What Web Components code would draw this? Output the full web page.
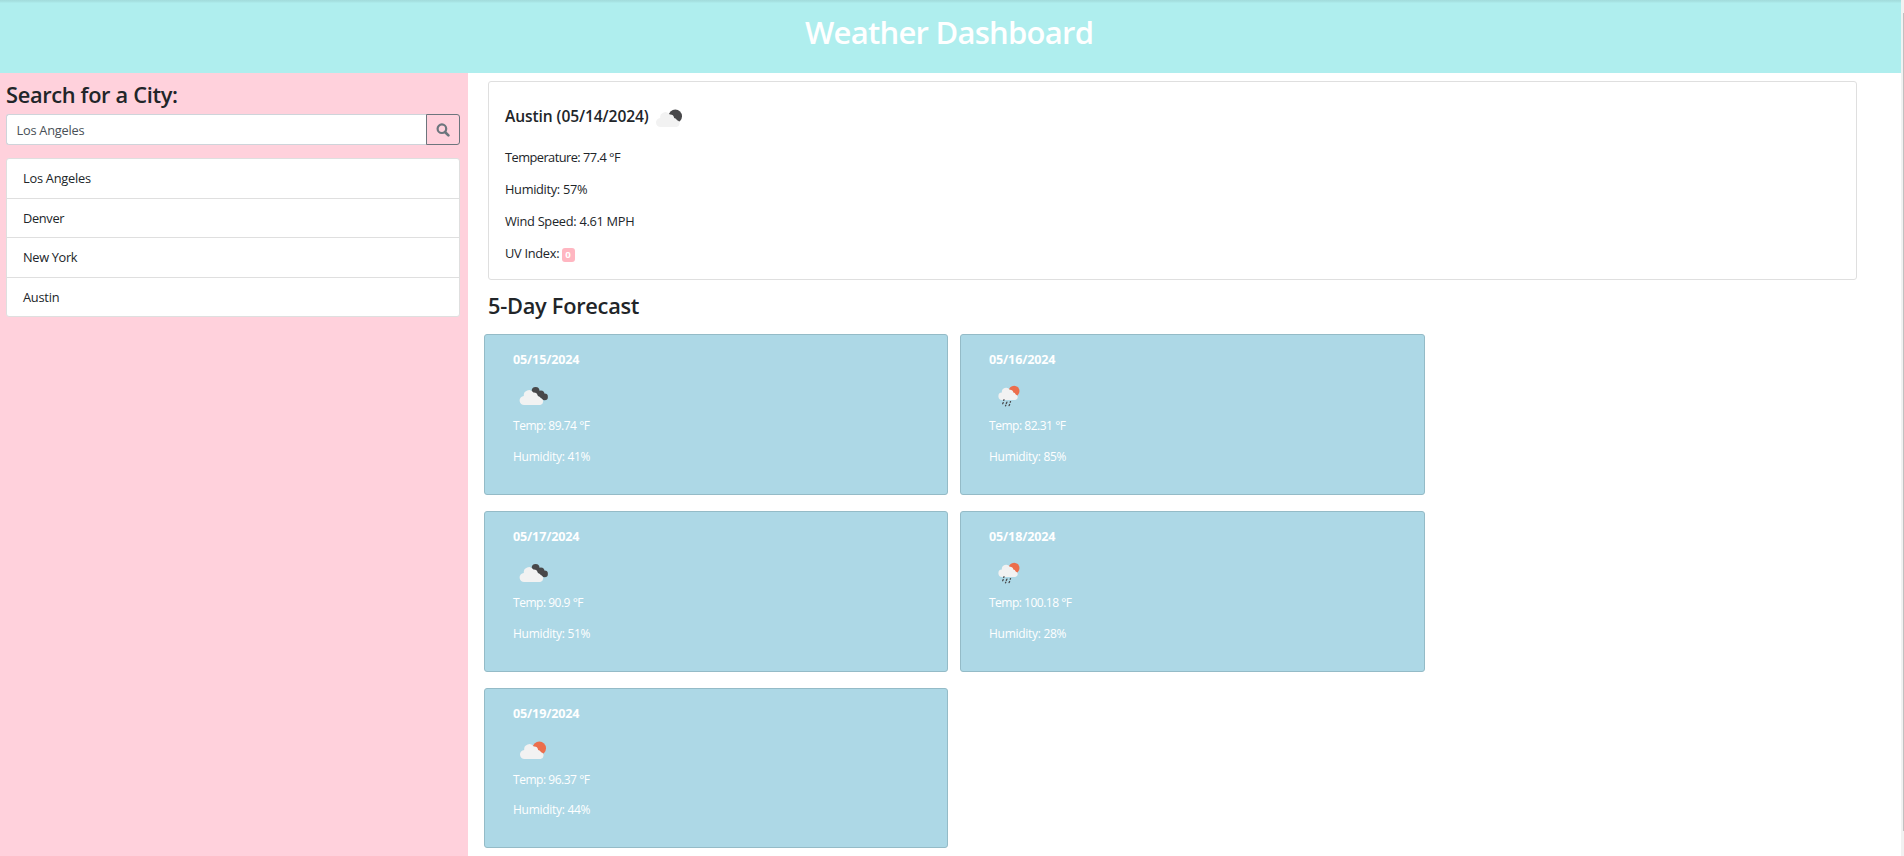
<!DOCTYPE html>
<html lang="en">
<head>
<meta charset="utf-8">
<title>Weather Dashboard</title>
<style>
html,body{margin:0;height:100%;overflow:hidden}
body{font:400 12.8px/19.2px "Open Sans","Noto Sans",sans-serif;color:#212529;background:#fff}
</style>
</head>
<body>
<weather-app>
  <app-header slot="header"><fit-text w="289">Weather Dashboard</fit-text></app-header>
  <city-search slot="side" query="Los Angeles">
    <city-item><fit-text w="68">Los Angeles</fit-text></city-item>
    <city-item><fit-text w="41.5">Denver</fit-text></city-item>
    <city-item><fit-text w="54.5">New York</fit-text></city-item>
    <city-item><fit-text w="36.5">Austin</fit-text></city-item>
  </city-search>
  <current-weather></current-weather>
  <section-title><fit-text w="151.5">5-Day Forecast</fit-text></section-title>
  <forecast-grid>
    <forecast-card date="05/15/2024" icon="clouds" temp="89.74" tw="77" hum="41"></forecast-card>
    <forecast-card date="05/16/2024" icon="rain" temp="82.31" tw="77" hum="85"></forecast-card>
    <forecast-card date="05/17/2024" icon="clouds" temp="90.9" tw="70.5" hum="51"></forecast-card>
    <forecast-card date="05/18/2024" icon="rain" temp="100.18" tw="83" hum="28"></forecast-card>
    <forecast-card date="05/19/2024" icon="sun" temp="96.37" tw="77" hum="44"></forecast-card>
  </forecast-grid>
</weather-app>
<script>
function define(name, render, init) {
  customElements.define(name, class extends HTMLElement {
    connectedCallback() {
      if (this.shadowRoot) return;
      this.attachShadow({mode: "open"}).innerHTML = render(this);
      if (init) init(this);
    }
  });
}

define("weather-app", () => `
<style>
:host{display:grid;grid-template-columns:1901px 3px;height:856px;overflow:hidden}
.page{display:grid;grid-template:73px 783px / 468px 1fr}
.head{grid-column:1/3}
main{padding:8px 0 0 16px;min-width:0}
.track{background:#f1f1f1;padding:13px 0 25px 2px;box-sizing:border-box;display:flex}
.thumb{flex:1;background:#c1c1c1}
</style>
<div class="page"><div class="head"><slot name="header"></slot></div><slot name="side"></slot><main><slot></slot></main></div>
<div class="track"><div class="thumb"></div></div>`);

define("app-header", () => `
<style>
:host{display:block;height:73px;box-sizing:border-box;padding-top:13px;padding-right:2px;text-align:center;color:#fff;
font-size:31px;line-height:39px;font-weight:600;background:linear-gradient(#a2dbdb,#a8e4e4 2px,#afeeee 3px)}
</style><slot></slot>`);

define("section-title", () => `
<style>:host{display:block;margin:12px 0 15px 4px;font-size:21.8px;line-height:27px;font-weight:600}</style><slot></slot>`);

define("city-search", el => `
<style>
:host{display:block;background:#ffd1dc;padding:8px 8px 0 6px}
h3{margin:0 0 6px;font-size:21.8px;line-height:27px;font-weight:600}
.group{display:flex;height:31px;margin-bottom:13px}
.field{flex:1;border:1px solid #ced4da;border-right:0;border-radius:3px 0 0 3px;background:#fff;color:#495057;padding:6px 10px 4px 9.5px}
button{width:34px;box-sizing:border-box;border:1px solid #6c757d;border-radius:0 3px 3px 0;background:none;padding:0;display:grid;place-items:center}
.list{display:block;border:1px solid #dfdfdf;border-radius:3px;background:#fff;height:159px;box-sizing:border-box;overflow:hidden}
svg{display:block}
</style>
<h3><fit-text w="172">Search for a City:</fit-text></h3>
<div class="group"><div class="field"><fit-text w="68">${el.getAttribute("query")}</fit-text></div>
<button aria-label="Search"><svg width="14" height="14" viewBox="0 0 14 14" fill="none" stroke="#6c757d"><circle cx="5.9" cy="5.7" r="4.3" stroke-width="2.2"/><path d="M9 9l3.4 3.4" stroke-width="2.6" stroke-linecap="round"/></svg></button></div>
<div class="list"><slot></slot></div>`);

define("city-item", () => `
<style>:host{display:block;box-sizing:border-box;height:39.5px;padding:10.2px 15.5px 8px 16px;border-bottom:1px solid #dfdfdf}</style><slot></slot>`);

const cloud = '<path fill="#f2f2f2" d="M11.4 29a4.5 4.5 0 0 1-.6-9A5.2 5.2 0 0 1 20.4 16.6a4.2 4.2 0 0 1 4.4 3.4 4.1 4.1 0 0 1 2.9 2.2A3.5 3.5 0 0 1 27.2 29z"/>';
const icons = {
  clouds: '<g fill="#48484a"><circle cx="22.6" cy="14.9" r="3.9"/><circle cx="27.9" cy="17.9" r="3.5"/><circle cx="31.6" cy="20.9" r="3.3"/><path d="M21 17l10 7 2-4-8-6z"/></g>' + cloud,
  sun: '<circle cx="26.3" cy="18.3" r="6.7" fill="#ec6e4c"/><g transform="translate(.4)">' + cloud + '</g>',
  night: '<circle cx="26.3" cy="18.3" r="6.7" fill="#48484a"/><g transform="translate(.4)">' + cloud + '</g>',
  rain: '<circle cx="25.1" cy="15.1" r="5.4" fill="#ec6e4c"/><g transform="translate(4 .2) scale(.82)">' + cloud + '</g><g stroke="#48484a" stroke-width="1.3" stroke-linecap="round"><path d="M15 23.8l-.3.6M14.2 26.6l-.5 1.1M17.9 26.2l-.6 1.2M16.8 29.2l-.3.6M21.5 25.6l-.3.6M20.6 28.5l-.5 1.1"/></g>'
};
define("weather-icon", el => `
<style>:host{display:block;width:40px;height:40px}svg{display:block}</style>
<svg width="40" height="40" viewBox="0 0 40 40">${icons[el.getAttribute("name")]}</svg>`);

define("current-weather", () => `
<style>
:host{display:block;box-sizing:border-box;width:1369px;height:199px;margin-left:4px;border:1px solid #dfdfdf;border-radius:3px;padding:16px}
.title{display:flex;height:40px;margin-bottom:9.5px;font-size:15.6px;line-height:37px;font-weight:600}
p{margin:0 0 12.8px}
.uv{display:flex;gap:2px}
.badge{box-sizing:border-box;width:13px;height:14px;border-radius:3px;background:#ffb6c1;color:#fff;font-size:9.6px;line-height:13px;font-weight:700;text-align:center;margin-top:4.4px}
</style>
<div class="title"><fit-text w="143.8">Austin (05/14/2024)</fit-text><weather-icon name="night"></weather-icon></div>
<p><fit-text w="115.5">Temperature: 77.4 °F</fit-text></p>
<p><fit-text w="82.5">Humidity: 57%</fit-text></p>
<p><fit-text w="129.7">Wind Speed: 4.61 MPH</fit-text></p>
<p class="uv"><fit-text w="54.5">UV Index:</fit-text><span class="badge">0</span></p>`);

define("forecast-grid", () => `
<style>:host{display:grid;grid-template-columns:464px 465px;grid-auto-rows:160.8px;gap:16px 12px}</style><slot></slot>`);

define("forecast-card", el => `
<style>
:host{display:block;box-sizing:border-box;border:1px solid #94bbc7;border-radius:3px;background:#add8e6;color:#fff;padding:15px 28px 13px;font-size:12px;line-height:18px}
h5{margin:0 0 6px;font-size:12.6px;line-height:20px;font-weight:700}
p{margin:0 0 12.6px}
weather-icon{margin-bottom:1.2px}
</style>
<h5><fit-text w="66.5">${el.getAttribute("date")}</fit-text></h5>
<weather-icon name="${el.getAttribute("icon")}"></weather-icon>
<p><fit-text w="${el.getAttribute("tw")}">Temp: ${el.getAttribute("temp")} °F</fit-text></p>
<p><fit-text w="77.5">Humidity: ${el.getAttribute("hum")}%</fit-text></p>`);

/* Tracks its text so that the line takes the width given in "w". */
define("fit-text", () => `<style>:host{display:inline-block;white-space:nowrap;text-align:left}</style><slot></slot>`, el => {
  const w = parseFloat(el.getAttribute("w")), n = el.textContent.length;
  const natural = el.getBoundingClientRect().width;
  el.style.letterSpacing = ((w - natural) / (n - 1)) + "px";
  el.style.width = w + "px";
});
</script>
</body>
</html>
